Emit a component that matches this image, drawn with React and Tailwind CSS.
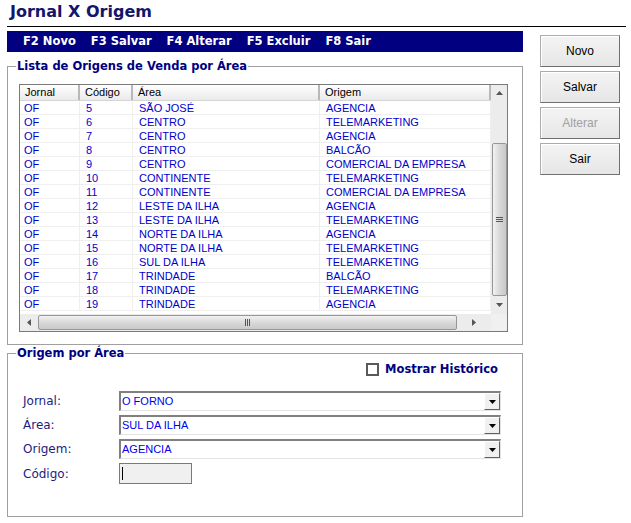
import React from "react";

const ROWS = [
  ["OF", "5", "SÃO JOSÉ", "AGENCIA"],
  ["OF", "6", "CENTRO", "TELEMARKETING"],
  ["OF", "7", "CENTRO", "AGENCIA"],
  ["OF", "8", "CENTRO", "BALCÃO"],
  ["OF", "9", "CENTRO", "COMERCIAL DA EMPRESA"],
  ["OF", "10", "CONTINENTE", "TELEMARKETING"],
  ["OF", "11", "CONTINENTE", "COMERCIAL DA EMPRESA"],
  ["OF", "12", "LESTE DA ILHA", "AGENCIA"],
  ["OF", "13", "LESTE DA ILHA", "TELEMARKETING"],
  ["OF", "14", "NORTE DA ILHA", "AGENCIA"],
  ["OF", "15", "NORTE DA ILHA", "TELEMARKETING"],
  ["OF", "16", "SUL DA ILHA", "TELEMARKETING"],
  ["OF", "17", "TRINDADE", "BALCÃO"],
  ["OF", "18", "TRINDADE", "TELEMARKETING"],
  ["OF", "19", "TRINDADE", "AGENCIA"],
];

const COLS = [
  { label: "Jornal", w: "w-[60px]" },
  { label: "Código", w: "w-[53px]" },
  { label: "Área", w: "w-[187px]" },
  { label: "Origem", w: "w-[171px]" },
];

const verdana = { fontFamily: '"DejaVu Sans", Verdana, sans-serif' };
const sans = { fontFamily: '"Liberation Sans", Arial, sans-serif' };

function SideButton({ label, disabled }) {
  return (
    <button
      className={`w-[80px] h-[32px] bg-gradient-to-b from-[#f4f4f4] to-[#e6e6e6] border border-[#acacac] border-r-[#707070] border-b-[#707070] shadow-[inset_1px_1px_0_#ffffff] text-[12px] ${
        disabled ? "text-[#a0a0a0]" : "text-black"
      }`}
      style={sans}
    >
      {label}
    </button>
  );
}

function Combo({ value }) {
  return (
    <div className="w-[382px] h-[20px] flex bg-white border-t-2 border-l-2 border-t-[#808080] border-l-[#808080] border-b border-r border-b-[#e3e3e3] border-r-[#e3e3e3]">
      <div className="flex-1 pl-[1px] text-[11px] leading-[17px] text-[#0000ee]" style={sans}>
        {value}
      </div>
      <div className="w-[16px] h-[17px] bg-[#f0f0f0] border-r border-b border-[#606060] border-t border-l border-t-white border-l-white flex items-center justify-center">
        <svg width="7" height="4" viewBox="0 0 7 4">
          <path d="M0 0h7L3.5 4z" fill="#000" />
        </svg>
      </div>
    </div>
  );
}

function FieldRow({ label, children }) {
  return (
    <div className="flex items-center h-[20px]">
      <div className="w-[96px] text-[12px] text-[#1c1c80]" style={verdana}>
        {label}
      </div>
      {children}
    </div>
  );
}

export default function App() {
  return (
    <div className="w-[631px] h-[523px] bg-white overflow-hidden" style={verdana}>
      <div className="h-[26px] pl-[10px] pt-[1px] text-[16px] font-bold leading-[22px] text-[#15156b]">
        Jornal X Origem
      </div>
      <div className="mx-[7px] mr-[5px] h-px bg-black" />

      <div className="flex">
        {/* left column */}
        <div className="ml-[7px] w-[516px]">
          <div className="mt-[4px] h-[21px] bg-[#000080] flex items-center text-white text-[11.5px] font-bold pl-[16px] gap-[15px]">
            <span>F2 Novo</span>
            <span>F3 Salvar</span>
            <span>F4 Alterar</span>
            <span>F5 Excluir</span>
            <span>F8 Sair</span>
          </div>

          {/* list group */}
          <fieldset className="mt-[7px] border border-[#a0a0a0]">
            <legend className="ml-[8px] px-[1px] text-[11.5px] leading-[14px] font-bold text-[#000080]">
              Lista de Origens de Venda por Área
            </legend>
            <div className="pl-[11px] pb-[12px]">
              <div className="mt-[11px] w-[489px] h-[248px] border border-[#7a7a7a] flex flex-col" style={sans}>
                <div className="flex h-[229px]">
                  <div className="w-[471px] flex flex-col">
                    <div className="flex h-[16px] bg-gradient-to-b from-[#ffffff] to-[#eaeaea] border-b border-[#d5d5d5]">
                      {COLS.map((c) => (
                        <div
                          key={c.label}
                          className={`${c.w} shrink-0 pl-[5px] text-[11px] leading-[15px] text-black border-r-2 border-r-[#b8b8b8]`}
                        >
                          {c.label}
                        </div>
                      ))}
                    </div>
                    <div className="h-[213px]">
                      {ROWS.map((r, i) => (
                        <div key={i} className="flex h-[14px]">
                          {r.map((v, j) => (
                            <div
                              key={j}
                              className={`${COLS[j].w} shrink-0 ${j === 0 ? "pl-[4px]" : "pl-[6px]"} text-[11px] leading-[14px] text-[#0000cc] border-r border-b border-[#efefef] whitespace-nowrap`}
                            >
                              {v}
                            </div>
                          ))}
                        </div>
                      ))}
                    </div>
                  </div>
                  {/* vertical scrollbar */}
                  <div className="w-[16px] bg-[#ececec] flex flex-col items-center">
                    <div className="h-[16px] flex items-center justify-center">
                      <svg width="7" height="4" viewBox="0 0 7 4">
                        <path d="M3.5 0L7 4H0z" fill="#555" />
                      </svg>
                    </div>
                    <div className="mt-[42px] w-[15px] h-[153px] rounded-[2px] border border-[#979797] bg-gradient-to-r from-[#f2f2f2] via-[#d9d9d9] to-[#c9c9c9] flex items-center justify-center">
                      <svg width="7" height="6" viewBox="0 0 7 6">
                        <path d="M0 0.5h7M0 2.5h7M0 4.5h7" stroke="#555" strokeWidth="1" />
                      </svg>
                    </div>
                    <div className="flex-1 flex items-center justify-center">
                      <svg width="7" height="4" viewBox="0 0 7 4">
                        <path d="M0 0h7L3.5 4z" fill="#555" />
                      </svg>
                    </div>
                  </div>
                </div>
                {/* horizontal scrollbar */}
                <div className="flex h-[17px]">
                  <div className="w-[471px] bg-[#ececec] flex items-center">
                    <div className="w-[17px] flex items-center justify-center">
                      <svg width="4" height="7" viewBox="0 0 4 7">
                        <path d="M0 3.5L4 0v7z" fill="#555" />
                      </svg>
                    </div>
                    <div className="ml-[1px] w-[419px] h-[15px] rounded-[2px] border border-[#979797] bg-gradient-to-b from-[#f2f2f2] via-[#d9d9d9] to-[#c9c9c9] flex items-center justify-center">
                      <svg width="6" height="7" viewBox="0 0 6 7">
                        <path d="M0.5 0v7M2.5 0v7M4.5 0v7" stroke="#555" strokeWidth="1" />
                      </svg>
                    </div>
                    <div className="flex-1 flex items-center justify-center">
                      <svg width="4" height="7" viewBox="0 0 4 7">
                        <path d="M4 3.5L0 0v7z" fill="#555" />
                      </svg>
                    </div>
                  </div>
                  <div className="flex-1 bg-[#f0f0f0]" />
                </div>
              </div>
            </div>
          </fieldset>

          {/* form group */}
          <fieldset className="mt-[1px] border border-[#a0a0a0]">
            <legend className="ml-[8px] px-[1px] text-[11.5px] leading-[14px] font-bold text-[#000080]">
              Origem por Área
            </legend>
            <div className="pl-[15px] pb-[32px]">
              <div className="mt-[3px] h-[13px] flex items-center justify-end pr-[24px] gap-[6px]">
                <div className="w-[13px] h-[13px] border-2 border-[#5a5a5a] bg-white" />
                <span className="text-[11.5px] font-bold text-[#000080]">Mostrar Histórico</span>
              </div>
              <div className="mt-[15px] flex flex-col gap-[4px]">
                <FieldRow label="Jornal:">
                  <Combo value="O FORNO" />
                </FieldRow>
                <FieldRow label="Área:">
                  <Combo value="SUL DA ILHA" />
                </FieldRow>
                <FieldRow label="Origem:">
                  <Combo value="AGENCIA" />
                </FieldRow>
                <div className="flex items-center h-[21px]">
                  <div className="w-[96px] text-[12px] text-[#1c1c80]">Código:</div>
                  <div className="w-[73px] h-[21px] bg-[#f0f0f0] border border-[#7a7a7a] flex items-center pl-[2px]">
                    <div className="w-px h-[13px] bg-black" />
                  </div>
                </div>
              </div>
            </div>
          </fieldset>
        </div>

        {/* right buttons */}
        <div className="ml-[17px] mt-[8px] flex flex-col gap-[4px]">
          <SideButton label="Novo" />
          <SideButton label="Salvar" />
          <SideButton label="Alterar" disabled />
          <SideButton label="Sair" />
        </div>
      </div>
    </div>
  );
}
